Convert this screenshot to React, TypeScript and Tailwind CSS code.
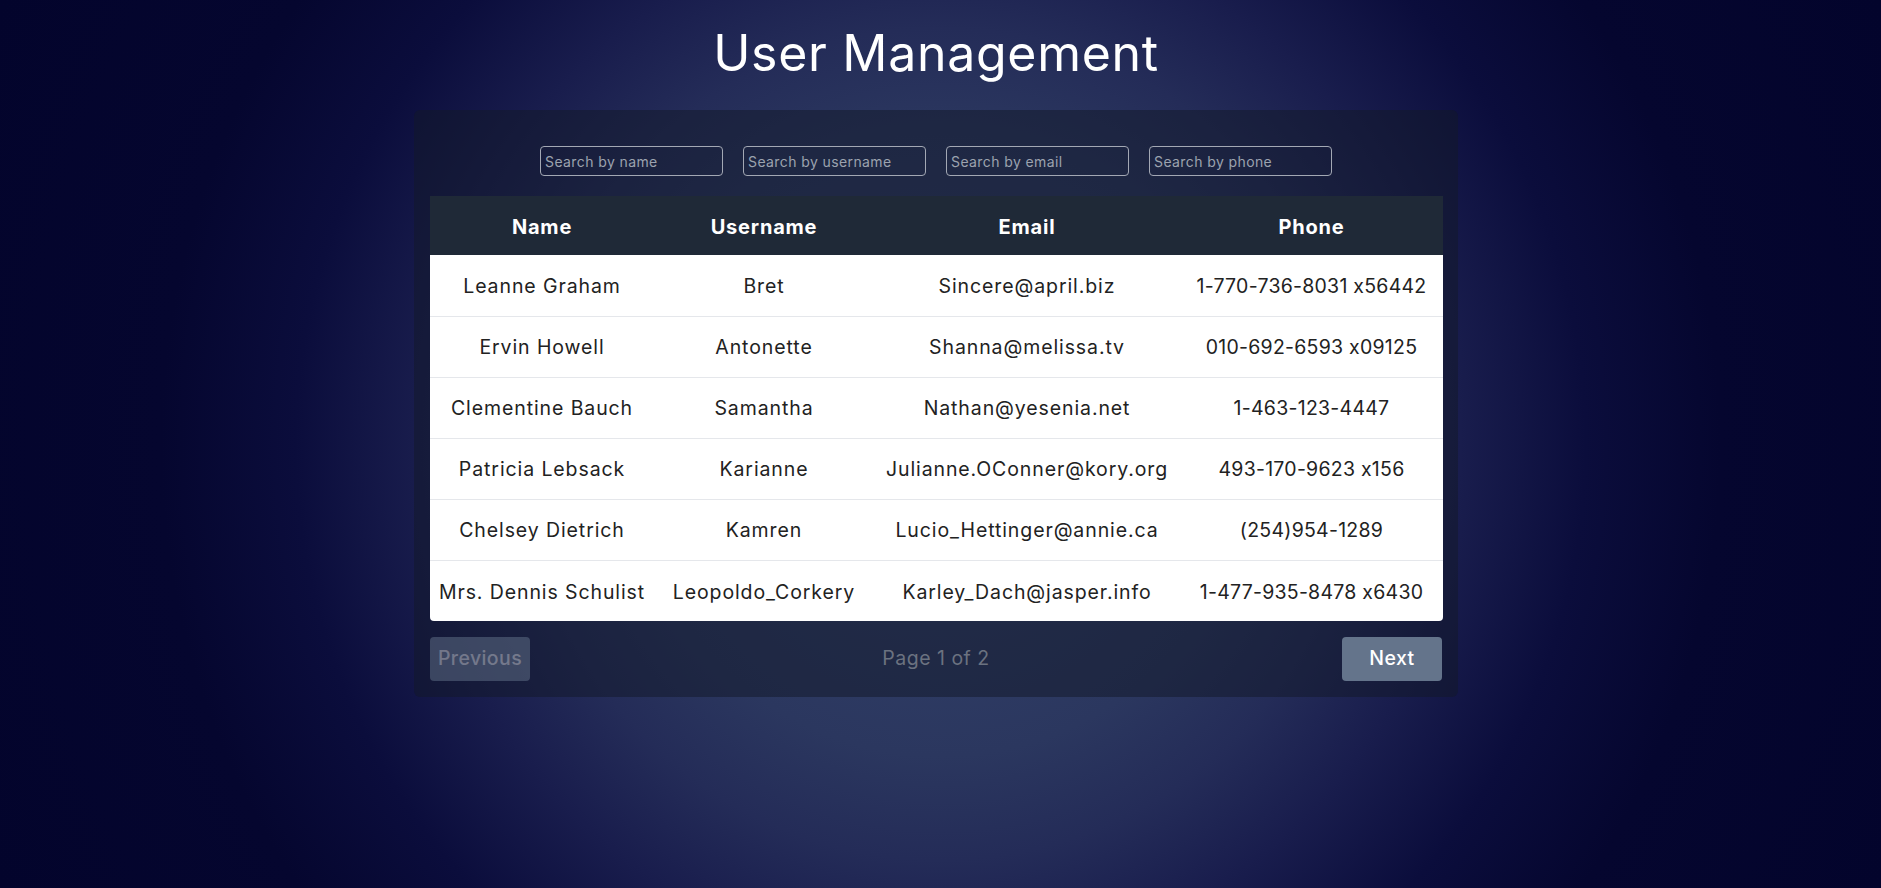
import React from "react";

const users = [
  { name: "Leanne Graham", username: "Bret", email: "Sincere@april.biz", phone: "1-770-736-8031 x56442" },
  { name: "Ervin Howell", username: "Antonette", email: "Shanna@melissa.tv", phone: "010-692-6593 x09125" },
  { name: "Clementine Bauch", username: "Samantha", email: "Nathan@yesenia.net", phone: "1-463-123-4447" },
  { name: "Patricia Lebsack", username: "Karianne", email: "Julianne.OConner@kory.org", phone: "493-170-9623 x156" },
  { name: "Chelsey Dietrich", username: "Kamren", email: "Lucio_Hettinger@annie.ca", phone: "(254)954-1289" },
  { name: "Mrs. Dennis Schulist", username: "Leopoldo_Corkery", email: "Karley_Dach@jasper.info", phone: "1-477-935-8478 x6430" },
];

const placeholders = ["Search by name", "Search by username", "Search by email", "Search by phone"];

export default function App() {
  return (
    <div className="min-h-screen w-full pr-[9px] flex flex-col items-center font-['Inter',sans-serif] [font-feature-settings:'calt'_0] bg-[radial-gradient(circle_at_center,#34436c_0%,#2b375f_30%,#242c58_40%,#191d4d_50%,#0b0d3c_62%,#05062f_75%,#03042c_100%)]">
      <h1 className="mt-[17px] text-white text-[50px] leading-[72px] font-normal tracking-[0.7px]">User Management</h1>
      <div className="mt-[21px] w-[1044px] rounded-md bg-[rgba(17,24,39,0.5)] p-4">
        <div className="flex justify-center gap-[20px] mt-[20px] mb-[20px]">
          {placeholders.map((p) => (
            <input
              key={p}
              placeholder={p}
              className="w-[183px] h-[30px] rounded-[4px] border border-[#a3a8b4] bg-transparent pl-[4px] text-[14px] tracking-[0.4px] text-white placeholder:text-[#9ca3af] outline-none"
            />
          ))}
        </div>
        <table className="w-[1013px] table-fixed border-collapse text-center">
          <colgroup>
            <col className="w-[224px]" />
            <col className="w-[220px]" />
            <col className="w-[306px]" />
            <col className="w-[263px]" />
          </colgroup>
          <thead>
            <tr className="bg-[#1f2937] h-[59px] text-white text-[20px] font-extrabold tracking-[0.8px]">
              <th className="pt-[3px]">Name</th>
              <th className="pt-[3px]">Username</th>
              <th className="pt-[3px]">Email</th>
              <th className="pt-[3px]">Phone</th>
            </tr>
          </thead>
          <tbody className="bg-white text-[#222] text-[19.5px] tracking-[0.9px]">
            {users.map((u, i) => (
              <tr key={u.name} className={"h-[61px] " + (i < users.length - 1 ? "border-b border-[#e5e7eb]" : "")}>
                <td className={i === users.length - 1 ? "pt-[3px] rounded-bl-[4px] whitespace-nowrap" : "pt-[3px] whitespace-nowrap"}>{u.name}</td>
                <td className="pt-[3px] whitespace-nowrap">{u.username}</td>
                <td className="pt-[3px] whitespace-nowrap">{u.email}</td>
                <td className={i === users.length - 1 ? "pt-[3px] tracking-[0.25px] rounded-br-[4px] whitespace-nowrap" : "pt-[3px] tracking-[0.25px] whitespace-nowrap"}>{u.phone}</td>
              </tr>
            ))}
          </tbody>
        </table>
        <div className="mt-4 flex items-center justify-between">
          <button className="w-[100px] h-[44px] rounded-[4px] bg-[#64748b] opacity-50 text-[#d1d5db] text-[19.5px] tracking-[0.4px] font-medium">Previous</button>
          <span className="text-[19.5px] tracking-[0.5px] text-[#6b7280]">Page 1 of 2</span>
          <button className="w-[100px] h-[44px] rounded-[4px] bg-[#64748b] text-white text-[19.5px] tracking-[0.4px] font-medium">Next</button>
        </div>
      </div>
    </div>
  );
}
